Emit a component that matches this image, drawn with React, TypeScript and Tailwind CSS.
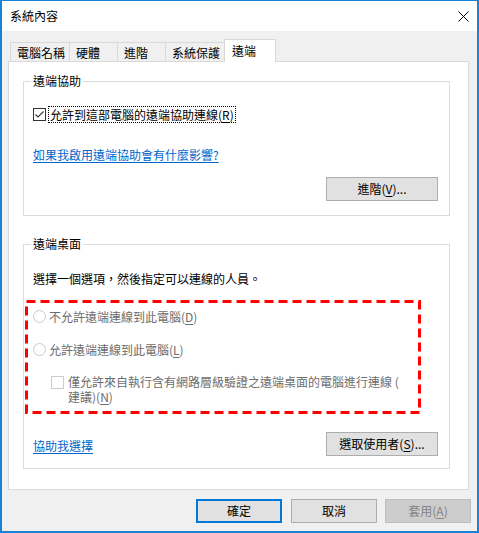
import type { ReactNode } from "react";

function CheckBox({ checked, disabled }: { checked?: boolean; disabled?: boolean }) {
    return (
        <span
            className={
                "flex h-[13px] w-[13px] shrink-0 items-center justify-center border bg-white " +
                (disabled ? "border-[#cccccc]" : "border-[#333333]")
            }
        >
            {checked && (
                <svg width="11" height="11" viewBox="0 0 11 11">
                    <path d="M1.5 5.5 L4 8 L9.5 2.5" fill="none" stroke="#333333" strokeWidth="1.1" />
                </svg>
            )}
        </span>
    );
}

function Radio() {
    return <span className="h-[13px] w-[13px] shrink-0 rounded-full border border-[#cccccc] bg-white" />;
}

function Key({ k }: { k: string }) {
    return (
        <>
            (<span className="underline underline-offset-2">{k}</span>)
        </>
    );
}

function Button({ children, kind = "normal", className = "" }: { children: ReactNode; kind?: "normal" | "default" | "disabled"; className?: string }) {
    const look =
        kind === "default"
            ? "border-2 border-[#0078d7] bg-[#e1e1e1] text-black"
            : kind === "disabled"
              ? "border border-[#bfbfbf] bg-[#cccccc] text-[#838383]"
              : "border border-[#adadad] bg-[#e1e1e1] text-black";
    return (
        <div className={"flex h-[24px] items-center justify-center leading-[14px] " + look + " " + className}>
            {children}
        </div>
    );
}

function Legend({ children }: { children: ReactNode }) {
    return <span className="-mt-[8px] ml-[7px] w-fit bg-white px-[2px] leading-[14px]">{children}</span>;
}

export default function App() {
    const tabs = [
        { name: "電腦名稱", w: "w-[60px]" },
        { name: "硬體", w: "w-[49px]" },
        { name: "進階", w: "w-[49px]" },
        { name: "系統保護", w: "w-[60px]" },
    ];

    return (
        <div className="flex h-[533px] w-[479px] flex-col border-x-2 border-b-2 border-t border-[#1a82d6] bg-[#f0f0f0] font-['Noto_Sans_CJK_TC',sans-serif] text-[12px] text-black">
            {/* title bar */}
            <div className="flex h-[30px] shrink-0 items-center justify-between bg-white pl-[8px] pr-[8px]">
                <span className="leading-[14px]">系統內容</span>
                <svg width="11" height="11" viewBox="0 0 11 11">
                    <path d="M0.5 0.5 L10.5 10.5 M10.5 0.5 L0.5 10.5" stroke="#000" strokeWidth="1" />
                </svg>
            </div>

            <div className="flex flex-col pl-[6px]">
                {/* tabs */}
                <div className="mt-[8px] flex h-[22px] items-end pl-[2px]">
                    {tabs.map((t, i) => (
                        <div
                            key={t.name}
                            className={
                                "h-[19px] border-x border-t border-[#d9d9d9] bg-[#f0f0f0] pl-[6px] pt-[3px] leading-[14px] " +
                                t.w +
                                (i > 0 ? " -ml-px" : "")
                            }
                        >
                            {t.name}
                        </div>
                    ))}
                    <div className="relative z-10 -mb-px -ml-px h-[23px] w-[52px] border-x border-t border-[#d9d9d9] bg-white pl-[7px] pt-[4px] leading-[14px]">
                        遠端
                    </div>
                </div>

                {/* panel */}
                <div className="flex h-[429px] w-[461px] flex-col border border-[#d9d9d9] bg-white">
                    {/* remote assistance */}
                    <div className="ml-[14px] mt-[19px] flex h-[135px] w-[427px] flex-col border border-[#dcdcdc]">
                        <Legend>遠端協助</Legend>
                        <div className="ml-[9px] mt-[18px] flex h-[17px] items-center">
                            <CheckBox checked />
                            <span className="ml-[2px] border border-dotted border-black px-[1px] leading-[15px]">
                                允許到這部電腦的遠端協助連線<Key k="R" />
                            </span>
                        </div>
                        <span className="ml-[9px] mt-[25px] w-fit leading-[14px] text-[#0066cc] underline underline-offset-2">
                            如果我啟用遠端協助會有什麼影響?
                        </span>
                        <Button className="mr-[11px] mt-[15px] w-[112px] self-end">
                            進階<Key k="V" />...
                        </Button>
                    </div>

                    {/* remote desktop */}
                    <div className="relative ml-[14px] mt-[28px] flex h-[225px] w-[427px] flex-col border border-[#dcdcdc]">
                        <Legend>遠端桌面</Legend>
                        <span className="ml-[9px] mt-[21px] leading-[14px]">選擇一個選項，然後指定可以連線的人員。</span>

                        <div className="ml-[9px] mt-[22px] flex h-[17px] items-center gap-[3px] text-[#6d6d6d]">
                            <Radio />
                            <span className="leading-[14px]">
                                不允許遠端連線到此電腦<Key k="D" />
                            </span>
                        </div>
                        <div className="ml-[9px] mt-[16px] flex h-[17px] items-center gap-[3px] text-[#6d6d6d]">
                            <Radio />
                            <span className="leading-[14px]">
                                允許遠端連線到此電腦<Key k="L" />
                            </span>
                        </div>
                        <div className="ml-[27px] mt-[16px] flex items-start gap-[4px] text-[#6d6d6d]">
                            <span className="mt-[2px]">
                                <CheckBox disabled />
                            </span>
                            <span className="leading-[15px]">
                                僅允許來自執行含有網路層級驗證之遠端桌面的電腦進行連線 (
                                <br />
                                建議)<Key k="N" />
                            </span>
                        </div>

                        <div className="mt-[28px] flex items-center justify-between pl-[9px] pr-[11px]">
                            <span className="mt-[4px] leading-[14px] text-[#0066cc] underline underline-offset-2">協助我選擇</span>
                            <Button className="w-[112px]">
                                選取使用者<Key k="S" />...
                            </Button>
                        </div>

                        {/* highlight annotation */}
                        <svg className="absolute left-[1px] top-[55px]" width="396" height="114" viewBox="0 0 396 114">
                            <rect x="1.5" y="1.5" width="393" height="111" fill="none" stroke="#ff0000" strokeWidth="3" strokeDasharray="9 5" />
                        </svg>
                    </div>
                </div>

                {/* dialog buttons */}
                <div className="mt-[9px] flex pl-[188px]">
                    <Button kind="default" className="w-[86px]">確定</Button>
                    <Button className="ml-[9px] w-[86px]">取消</Button>
                    <Button kind="disabled" className="ml-[8px] w-[86px]">
                        套用<Key k="A" />
                    </Button>
                </div>
            </div>
        </div>
    );
}
